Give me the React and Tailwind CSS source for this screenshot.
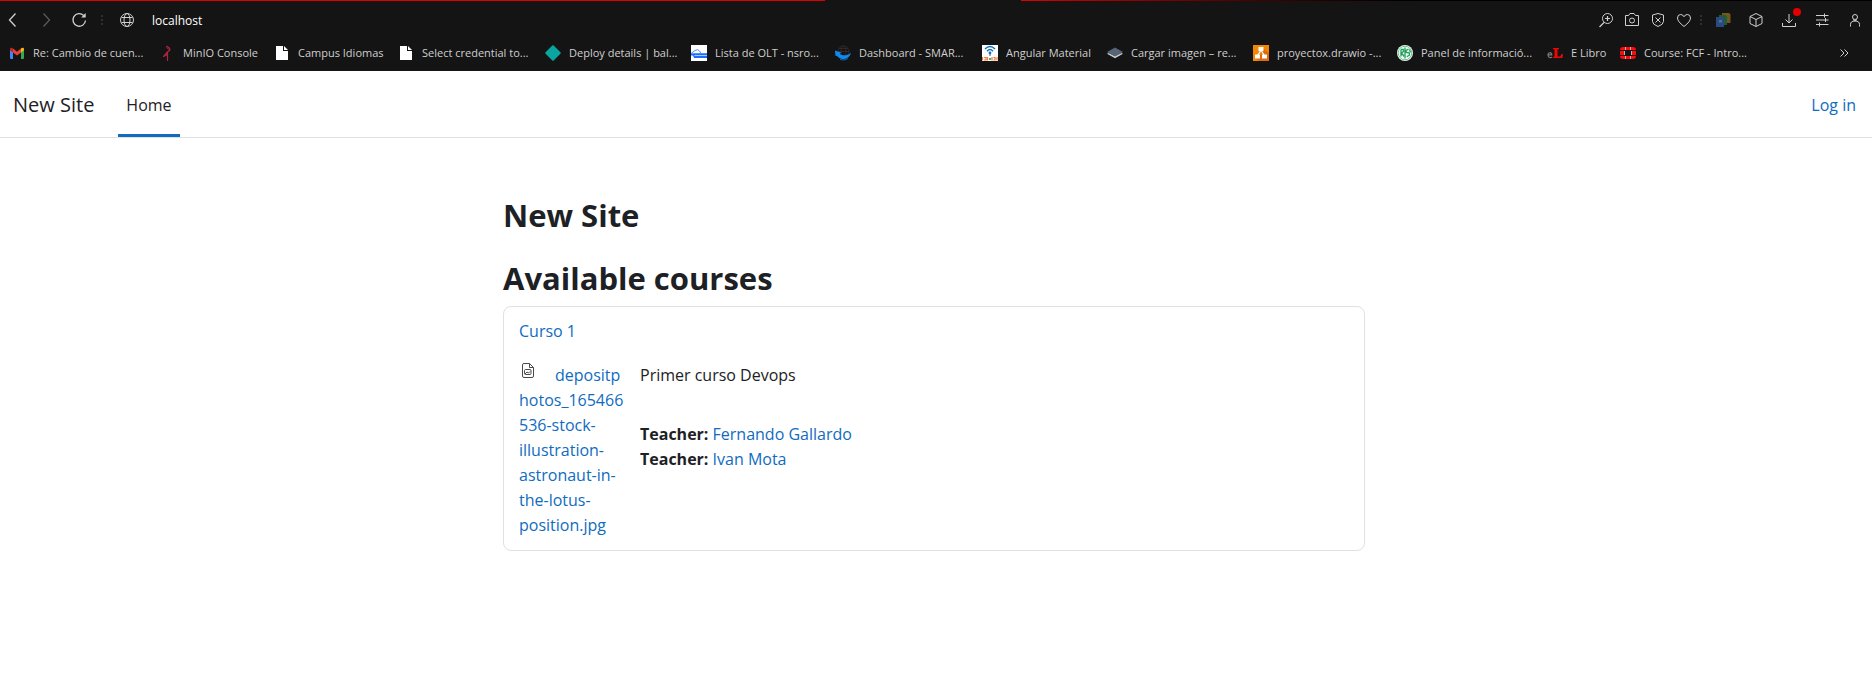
function Svg({ size = 16, children, className = "" }) {
  return (
    <svg
      width={size}
      height={size}
      viewBox={`0 0 ${size} ${size}`}
      fill="none"
      stroke="currentColor"
      className={`shrink-0 ${className}`}
      aria-hidden="true"
    >
      {children}
    </svg>
  );
}

function GmailIcon() {
  return (
    <Svg>
      <g stroke="none">
        <path d="M1 4.5l3 2.3V14H2a1 1 0 0 1-1-1z" fill="#4285f4" />
        <path d="M12 6.800l3-2.300V13a1 1 0 0 1-1 1h-2z" fill="#34a853" />
        <path d="M4 3.500l4 3.200 4-3.200v4L8 10.600 4 7.500z" fill="#ea4335" />
        <path d="M1 4.200C1 2.800 2.700 2.300 4 3.500v4L1 5.300z" fill="#c5221f" />
        <path d="M15 4.200c0-1.400-1.700-1.900-3-.7v4l3-2.200z" fill="#fbbc04" />
      </g>
    </Svg>
  );
}

function MinioIcon() {
  return (
    <Svg>
      <g stroke="#b0243f" strokeLinecap="round" strokeLinejoin="round">
        <path d="M8 1.300L10.500 3.200 10.800 5.200 8.500 7" strokeWidth="1.300" />
        <path d="M8 1.300L7.300 2.500 10 4.500" strokeWidth="0.800" />
        <path d="M8.500 7L4.500 11.500 8.500 9.500zM8.500 7V15.500" strokeWidth="1.200" />
      </g>
    </Svg>
  );
}

function PageIcon() {
  return (
    <Svg>
      <path d="M2 1h7v5h5v9H2z" fill="#fff" stroke="none" />
      <path d="M10 1l4 4h-4z" fill="#fff" stroke="none" />
    </Svg>
  );
}

function DiamondIcon() {
  return (
    <Svg>
      <path d="M7.300.6a1 1 0 0 1 1.400 0l6.700 6.700a1 1 0 0 1 0 1.400l-6.700 6.700a1 1 0 0 1-1.400 0L.6 8.700a1 1 0 0 1 0-1.400z" fill="#0aa5a0" stroke="none" />
    </Svg>
  );
}

function OltIcon() {
  return (
    <Svg>
      <rect width="16" height="16" fill="#fff" stroke="none" />
      <path d="M0 8.500L4 5.500Q7 3.500 8.500 6L10 8.500" stroke="#4f8ff7" strokeWidth="1" />
      <path d="M0 8.500l3-.3h13V10H3.500v.8H16V13H3L2 10.500H0z" fill="#1a6dff" stroke="none" />
      <path d="M4 10.500h12" stroke="#9cc3ff" strokeWidth="0.800" />
    </Svg>
  );
}

function DashboardIcon() {
  return (
    <Svg>
      <g stroke="#33292b" strokeWidth="0.900">
        <circle cx="8.500" cy="6.500" r="5.500" />
        <ellipse cx="8.500" cy="6.500" rx="2.500" ry="5.500" />
        <path d="M3 6.500h11M4 3.500h9" />
      </g>
      <path d="M0 5.500l6.500 2.300-1.800.9c2.800 2.300 7 2.300 11.300-1-1 3.800-4 6.300-7.800 6.300-3 0-5.200-1.300-6.200-3.200L.5 11z" fill="#0d8bf2" stroke="none" />
      <path d="M5 14.500q4 1.500 8-1" stroke="#0d6fc2" strokeWidth="0.900" />
    </Svg>
  );
}

function WifiIcon() {
  return (
    <Svg>
      <rect width="16" height="16" fill="#fff" stroke="none" />
      <g stroke="#1370b8" strokeWidth="1.500">
        <path d="M3 4Q8-1 13 4" />
        <path d="M5 6.200Q8 3 11 6.200" />
      </g>
      <circle cx="8" cy="8" r="1.400" fill="#1370b8" stroke="none" />
      <path d="M8 9v2" stroke="#1370b8" />
      <path d="M.5 12v3.500M2 12.500h2v2.500H2M5.500 12v3.500M10 12v3.500M11.500 12.500h1.500v2.500h-1.500M15 12v3.500" stroke="#f07838" strokeWidth="1.200" />
      <path d="M7 13h2v2H7z" fill="#5aa86a" stroke="none" />
    </Svg>
  );
}

function LayersIcon() {
  return (
    <Svg>
      <path d="M0 8.800l8 4.400 8-4.400-1.500-.8L8 11 1.500 8z" fill="#c9cdd0" stroke="none" />
      <path d="M8 2.500l8 4.500-8 4.500L0 7z" fill="#566474" stroke="none" />
    </Svg>
  );
}

function DrawioIcon() {
  return (
    <Svg>
      <rect width="16" height="16" fill="#f08705" stroke="none" />
      <path d="M10 3l6 5v8H6l-3.500-3.500 6-3z" fill="#df6c0c" stroke="none" />
      <path d="M8 5L4.500 11M8 5l3.500 6" stroke="#fff" strokeWidth="1.300" />
      <rect x="5.500" y="2" width="5" height="4" rx="0.500" fill="#fff" stroke="none" />
      <rect x="2" y="9.500" width="5" height="4" rx="0.500" fill="#fff" stroke="none" />
      <rect x="9" y="9.500" width="5" height="4" rx="0.500" fill="#fff" stroke="none" />
    </Svg>
  );
}

function PanelIcon() {
  return (
    <Svg>
      <circle cx="8" cy="8" r="8" fill="#f2faf5" stroke="none" />
      <circle cx="8" cy="8" r="6.800" stroke="#4fb37b" strokeWidth="0.800" />
      <g stroke="#1f9e58" strokeWidth="1.300">
        <path d="M4 4.500v7M4 4.500h2.200L7 6 4.500 8l2.800 3.500" />
        <path d="M11.500 4.200L9 5.500l.3 2 2.800.3.500 2.200-2.800 1.800M8 2.500v11M12.500 4.500l1 3" />
      </g>
    </Svg>
  );
}

function LibroIcon() {
  return (
    <Svg>
      <path d="M.8 9.800h4C4.800 7 1 7 1 10s3 3 4 1.800" stroke="#7b7b7b" strokeWidth="1.200" />
      <path d="M6 3h6v1.200h-1.500v7.300h2.700L14.500 9H16l-.5 4H6v-1.200h1.500V4.200H6z" fill="#ee0505" stroke="none" />
    </Svg>
  );
}

function FortinetIcon() {
  return (
    <Svg>
      <g stroke="none" fill="#fa0a0a">
        <path d="M3 2h2v3H0Q0 2 3 2zM11 2h2q3 0 3 3h-5zM0 11h5v3H3q-3 0-3-3zM11 11h5q0 3-3 3h-2z" />
        <path d="M6 2h4v3H6zM6 11h4v3H6zM0 6h4v4H0zM12 6h4v4h-4z" />
      </g>
      <path d="M5.500 2v3M10.500 2v3M5.500 11v3M10.500 11v3M4.500 6v4M11.500 6v4" stroke="#ddd" strokeWidth="0.800" />
    </Svg>
  );
}

const bookmarks = [
  { label: "Re: Cambio de cuen...", icon: GmailIcon, width: "w-[150px]" },
  { label: "MinIO Console", icon: MinioIcon, width: "w-[115px]" },
  { label: "Campus Idiomas", icon: PageIcon, width: "w-[124px]" },
  { label: "Select credential to...", icon: PageIcon, width: "w-[147px]" },
  { label: "Deploy details | bal...", icon: DiamondIcon, width: "w-[146px]" },
  { label: "Lista de OLT - nsro...", icon: OltIcon, width: "w-[144px]" },
  { label: "Dashboard - SMAR...", icon: DashboardIcon, width: "w-[147px]" },
  { label: "Angular Material", icon: WifiIcon, width: "w-[125px]" },
  { label: "Cargar imagen – re...", icon: LayersIcon, width: "w-[146px]" },
  { label: "proyectox.drawio -...", icon: DrawioIcon, width: "w-[144px]" },
  { label: "Panel de informació...", icon: PanelIcon, width: "w-[150px]" },
  { label: "E Libro", icon: LibroIcon, width: "w-[73px]" },
  { label: "Course: FCF - Intro...", icon: FortinetIcon, width: "w-[147px]" },
];

function ToolButton({ label, children, className = "" }) {
  return (
    <button type="button" aria-label={label} className={`relative flex shrink-0 ${className}`}>
      {children}
    </button>
  );
}

function Dots() {
  return (
    <svg width="2" height="12" viewBox="0 0 2 12" fill="#303030" className="shrink-0" aria-hidden="true">
      <path d="M0 1h2v2H0zM0 5h2v2H0zM0 9h2v2H0z" />
    </svg>
  );
}

function Toolbar() {
  return (
    <div className="flex h-[38px] items-center pr-[9px] pl-[5px] text-[#d0d0d0]">
      <ToolButton label="Back">
        <Svg><path d="M10.500 1.500L4.500 8l6 6.500" strokeWidth="1.300" /></Svg>
      </ToolButton>
      <ToolButton label="Forward" className="ml-[17px] text-[#5a5a5a]">
        <Svg><path d="M5.500 1.500l6 6.500-6 6.500" strokeWidth="1.300" /></Svg>
      </ToolButton>
      <ToolButton label="Reload" className="ml-[17px]">
        <Svg>
          <path d="M14.500 8.500a6.300 6.300 0 1 1-1.800-5" strokeWidth="1.300" />
          <path d="M14.700 1v4.500h-4.500z" fill="currentColor" stroke="none" />
        </Svg>
      </ToolButton>
      <div className="ml-[14px] flex"><Dots /></div>
      <ToolButton label="Site information" className="ml-[16px]">
        <Svg>
          <circle cx="8" cy="8" r="6.500" />
          <ellipse cx="8" cy="8" rx="3" ry="6.500" />
          <path d="M2.500 5.500h11M2.500 10.500h11" />
        </Svg>
      </ToolButton>
      <input
        aria-label="Address"
        defaultValue="localhost"
        className="ml-[17px] h-6 min-w-0 flex-1 bg-transparent text-xs text-white outline-none"
      />
      <div className="flex items-center gap-[10px]">
        <ToolButton label="Zoom">
          <Svg>
            <circle cx="9.500" cy="6.500" r="5" />
            <path d="M6 10.500L1.500 15M9.500 4v5M7 6.500h5" strokeWidth="1.200" />
          </Svg>
        </ToolButton>
        <ToolButton label="Snapshot">
          <Svg>
            <path d="M1.500 3.500h3l1.500-2h4l1.500 2h3v10h-13z" />
            <circle cx="8" cy="8.500" r="2.500" />
          </Svg>
        </ToolButton>
        <ToolButton label="Ad blocker">
          <Svg>
            <path d="M8 1.500l5.500 1.500v6.500q0 3-5.500 5-5.500-2-5.500-5V3z" />
            <path d="M5.500 5.500l5 5M10.500 5.500l-5 5" />
          </Svg>
        </ToolButton>
        <ToolButton label="Favourite">
          <Svg><path d="M8 14.500Q1.500 9.500 1.500 6 1.500 2.500 4.700 2.500 7 2.500 8 4.800 9 2.500 11.300 2.500q3.200 0 3.200 3.500 0 3.500-6.500 8.500z" /></Svg>
        </ToolButton>
      </div>
      <div className="ml-2 flex"><Dots /></div>
      <div className="ml-[13px] flex items-center gap-[17px]">
        <ToolButton label="Translate extension">
          <Svg>
            <g stroke="none">
              <path d="M7 1h7l1.500 1.500V11H7z" fill="#735819" />
              <path d="M4 3h6.500l1.500 1.500V13H4z" fill="#1f5c37" />
              <path d="M1 5h6.500L9 6.500V15H1z" fill="#2a4a80" />
              <path d="M3 8h1v2.500h3V8h-1" fill="#50719f" />
            </g>
          </Svg>
        </ToolButton>
        <ToolButton label="Extensions">
          <Svg>
            <path d="M8 1.500l6 3v7l-6 3-6-3v-7zM2 4.500l6 3 6-3M8 7.500v7" />
          </Svg>
        </ToolButton>
        <ToolButton label="Downloads">
          <Svg>
            <path d="M8 2v9M4.500 7.500L8 11l3.500-3.500M1.500 11v3.500h13V11" />
          </Svg>
          <span className="absolute -top-[4px] left-[12px] size-2 rounded-full bg-[#e00000]" />
        </ToolButton>
        <ToolButton label="Easy setup">
          <Svg>
            <path d="M2 3.500h12.500M2 8h12.500M2 12.500h12.500M10.500 1.500v4M11.500 6v4M5.500 10.500v4" />
          </Svg>
        </ToolButton>
        <ToolButton label="Profile">
          <Svg>
            <circle cx="8" cy="5" r="2.500" />
            <path d="M3.500 14.500v-2q0-3.500 4.500-3.500 4.500 0 4.500 3.500v2M6 7.500L8 9l2-1.500" />
          </Svg>
        </ToolButton>
      </div>
    </div>
  );
}

function BookmarksBar() {
  return (
    <nav aria-label="Bookmarks" className="flex h-8 items-center justify-between pr-5 pb-[5px] pl-[9px] text-[11px] leading-4 text-[#cfcfcf]">
      <ul className="flex">
        {bookmarks.map(({ label, icon: Icon, width }) => (
          <li key={label} className={`shrink-0 ${width}`}>
            <a href="#" className="flex items-center gap-2 whitespace-nowrap">
              <Icon />
              {label}
            </a>
          </li>
        ))}
      </ul>
      <ToolButton label="More bookmarks">
        <Svg><path d="M4.500 4.500L8 8l-3.500 3.500M8.500 4.500L12 8l-3.500 3.500" /></Svg>
      </ToolButton>
    </nav>
  );
}

function BrowserChrome() {
  return (
    <header className="bg-[#141414] font-['Open_Sans','Noto_Sans',sans-serif]">
      <div className="flex h-px">
        <div className="w-[825px] bg-[#e00000]" />
        <div className="w-[196px]" />
        <div className="flex-1 bg-linear-to-r from-[#e00000] to-black to-50%" />
      </div>
      <Toolbar />
      <BookmarksBar />
    </header>
  );
}

function FileImageIcon() {
  return (
    <svg width="12" height="15" viewBox="0 0 12 15" fill="none" stroke="#4a4a4a" className="shrink-0" aria-hidden="true">
      <path d="M2 .5h5.500l4 4V13q0 1.500-1.500 1.500H2Q.5 14.500.5 13V2Q.5.500 2 .5zM7.500.5v4h4" />
      <rect x="2.500" y="6.500" width="6.500" height="5" rx="1" />
      <path d="M3 11l2-2 1.500 1L8 8.500" />
    </svg>
  );
}

const teachers = ["Fernando Gallardo", "Ivan Mota"];

export default function App() {
  return (
    <div className="min-h-screen bg-white font-['Open_Sans','Noto_Sans',sans-serif] text-base leading-[25px] text-[#1d2125]">
      <BrowserChrome />
      <nav aria-label="Site" className="flex h-[67px] items-stretch border-b border-[#dee2e6] pr-4 pl-[13px]">
        <a href="#" className="flex items-center pt-0.5 text-xl">New Site</a>
        <a href="#" className="ml-6 flex items-center border-b-3 border-[#0f6cbf] px-2 pt-[5px]">Home</a>
        <a href="#" className="ml-auto flex items-center pt-0.5 text-[#0f6cbf]">Log in</a>
      </nav>
      <main className="pt-[56px] pr-1">
        <div className="mx-auto max-w-[862px]">
          <h1 className="text-[31px] leading-[42px] font-bold">New Site</h1>
          <h2 className="mt-[21px] text-[31px] leading-[42px] font-bold">Available courses</h2>
          <article className="mt-[7px] rounded-lg border border-[#dee2e6] px-[15px] pt-3 pb-3">
            <h3><a href="#" className="text-[#0f6cbf]">Curso 1</a></h3>
            <div className="mt-[19px] flex">
              <a href="#" className="w-[104px] shrink-0 text-[#0f6cbf]">
                <span className="mr-[21px] ml-[3px] inline-block align-[3px]"><FileImageIcon /></span>
                depositp<br />hotos_165466<br />536-stock-<br />illustration-<br />astronaut-in-<br />the-lotus-<br />position.jpg
              </a>
              <div className="ml-[17px]">
                <p>Primer curso Devops</p>
                <ul className="mt-[34px]">
                  {teachers.map((name) => (
                    <li key={name}>
                      <span className="font-bold">Teacher: </span>
                      <a href="#" className="text-[#0f6cbf]">{name}</a>
                    </li>
                  ))}
                </ul>
              </div>
            </div>
          </article>
        </div>
      </main>
    </div>
  );
}
